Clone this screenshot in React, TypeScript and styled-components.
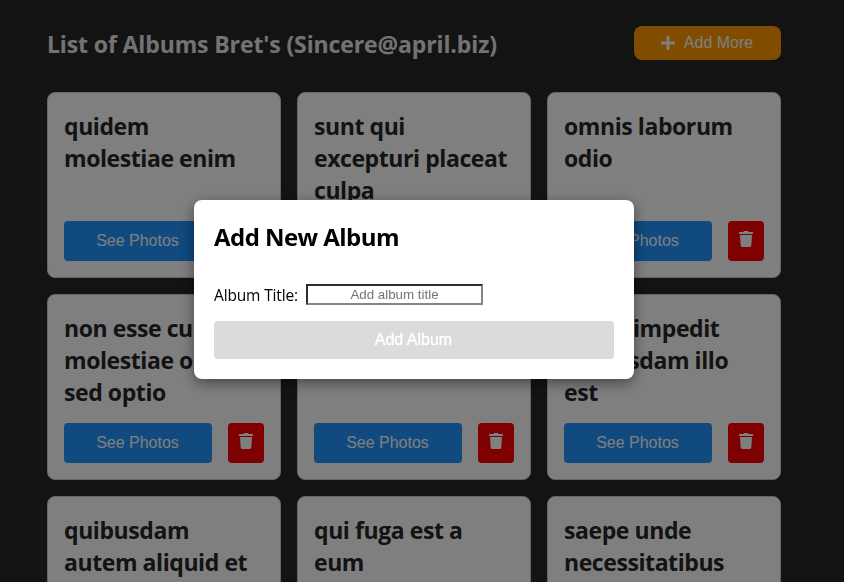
import React from "react";
import styled, { createGlobalStyle } from "styled-components";
import { FaPlus, FaTrash } from "react-icons/fa";

const GlobalStyle = createGlobalStyle`
  * { box-sizing: border-box; }
  body {
    margin: 0;
    height: 582px;
    overflow: hidden;
    background: #262626;
    color: #262626;
    font-family: "Segoe UI", "Open Sans", "Noto Sans", sans-serif;
  }
`;

const Page = styled.main`
  width: 734px;
  height: 582px;
  overflow: hidden;
  margin-left: 47px;
  padding-top: 26px;
`;

const Header = styled.header`
  display: flex;
  justify-content: space-between;
  height: 66px;
`;

const Title = styled.h1`
  margin: 2px 0 0;
  font-size: 23px;
  line-height: 32px;
  font-weight: 700;
  letter-spacing: -0.12px;
  color: #e6e6e6;
  white-space: nowrap;
`;

const Button = styled.button`
  display: flex;
  align-items: center;
  justify-content: center;
  border: 0;
  padding: 0 1px 0 0;
  color: #fff;
  font: 16px "Liberation Sans", Arial, sans-serif;
  border-radius: 4px;
`;

const AddMoreButton = styled(Button)`
  width: 147px;
  height: 34px;
  gap: 8px;
  padding-right: 2px;
  border-radius: 8px;
  background: #ff9800;
`;

const Grid = styled.section`
  display: grid;
  grid-template-columns: repeat(3, 234px);
  gap: 16px;
`;

const Card = styled.article`
  display: flex;
  flex-direction: column;
  justify-content: space-between;
  height: 186px;
  padding: 17px 16px 16px;
  border: 1px solid #ccc;
  border-radius: 8px;
  background: #fff;
`;

const AlbumName = styled.h2`
  margin: 0;
  font-size: 23px;
  line-height: 32px;
  font-weight: 700;
  letter-spacing: -0.42px;
  white-space: nowrap;
`;

const Line = styled.span`
  display: block;
`;

const Actions = styled.div`
  display: flex;
  gap: 16px;
`;

const PhotosButton = styled(Button)`
  flex: 1;
  height: 40px;
  background: #2094ff;
`;

const DeleteButton = styled(Button)`
  width: 36px;
  height: 40px;
  padding: 0 0 4px;
  background: #f00;
`;

const Overlay = styled.div`
  position: fixed;
  inset: 0;
  display: flex;
  justify-content: center;
  align-items: flex-start;
  padding: 200px 16px 0 0;
  background: rgba(0, 0, 0, 0.5);
`;

const Dialog = styled.div`
  width: 440px;
  height: 179px;
  padding: 19px 20px 20px;
  border-radius: 8px;
  background: #fff;
  color: #000;
  box-shadow: 0 4px 14px rgba(0, 0, 0, 0.45);
`;

const DialogTitle = styled.h2`
  margin: 0 0 30px;
  font-size: 24px;
  line-height: 36px;
  font-weight: 700;
  letter-spacing: -0.55px;
`;

const Field = styled.label`
  display: flex;
  align-items: flex-start;
  gap: 8px;
  height: 20px;
  font-size: 15.5px;
  line-height: 20px;
  letter-spacing: -0.15px;
`;

const FieldName = styled.span`
  width: 84px;
  white-space: nowrap;
`;

const TextInput = styled.input`
  width: 177px;
  height: 21px;
  margin-top: -1px;
  padding: 1px 2px;
  border: 2px solid;
  border-color: #2e2e2e #858585 #858585 #2e2e2e;
  background: #fff;
  font: 13.333px "Liberation Sans", Arial, sans-serif;
  text-align: center;

  &::placeholder { color: #757575; }
`;

const SubmitButton = styled(Button)`
  width: 100%;
  height: 38px;
  margin-top: 16px;
  background: #dbdbdb;
  -webkit-text-stroke: 0.3px #fff;
`;

const albums = [
  ["quidem", "molestiae enim"],
  ["sunt qui", "excepturi placeat", "culpa"],
  ["omnis laborum", "odio"],
  ["non esse culpa", "molestiae omnis", "sed optio"],
  ["eaque aut", "omnis a"],
  ["natus impedit", "quibusdam illo", "est"],
  ["quibusdam", "autem aliquid et"],
  ["qui fuga est a", "eum"],
  ["saepe unde", "necessitatibus"],
];

export default function App() {
  return (
    <>
      <GlobalStyle />
      <Page>
        <Header>
          <Title>List of Albums Bret's (Sincere@april.biz)</Title>
          <AddMoreButton>
            <FaPlus />
            <span>Add More</span>
          </AddMoreButton>
        </Header>
        <Grid>
          {albums.map((lines) => (
            <Card key={lines[0]}>
              <AlbumName>
                {lines.map((line) => (
                  <Line key={line}>{line}</Line>
                ))}
              </AlbumName>
              <Actions>
                <PhotosButton>See Photos</PhotosButton>
                <DeleteButton aria-label="Delete album"><FaTrash /></DeleteButton>
              </Actions>
            </Card>
          ))}
        </Grid>
      </Page>
      <Overlay>
        <Dialog role="dialog">
          <DialogTitle>Add New Album</DialogTitle>
          <Field>
            <FieldName>Album Title:</FieldName>
            <TextInput placeholder="Add album title" />
          </Field>
          <SubmitButton disabled>Add Album</SubmitButton>
        </Dialog>
      </Overlay>
    </>
  );
}
